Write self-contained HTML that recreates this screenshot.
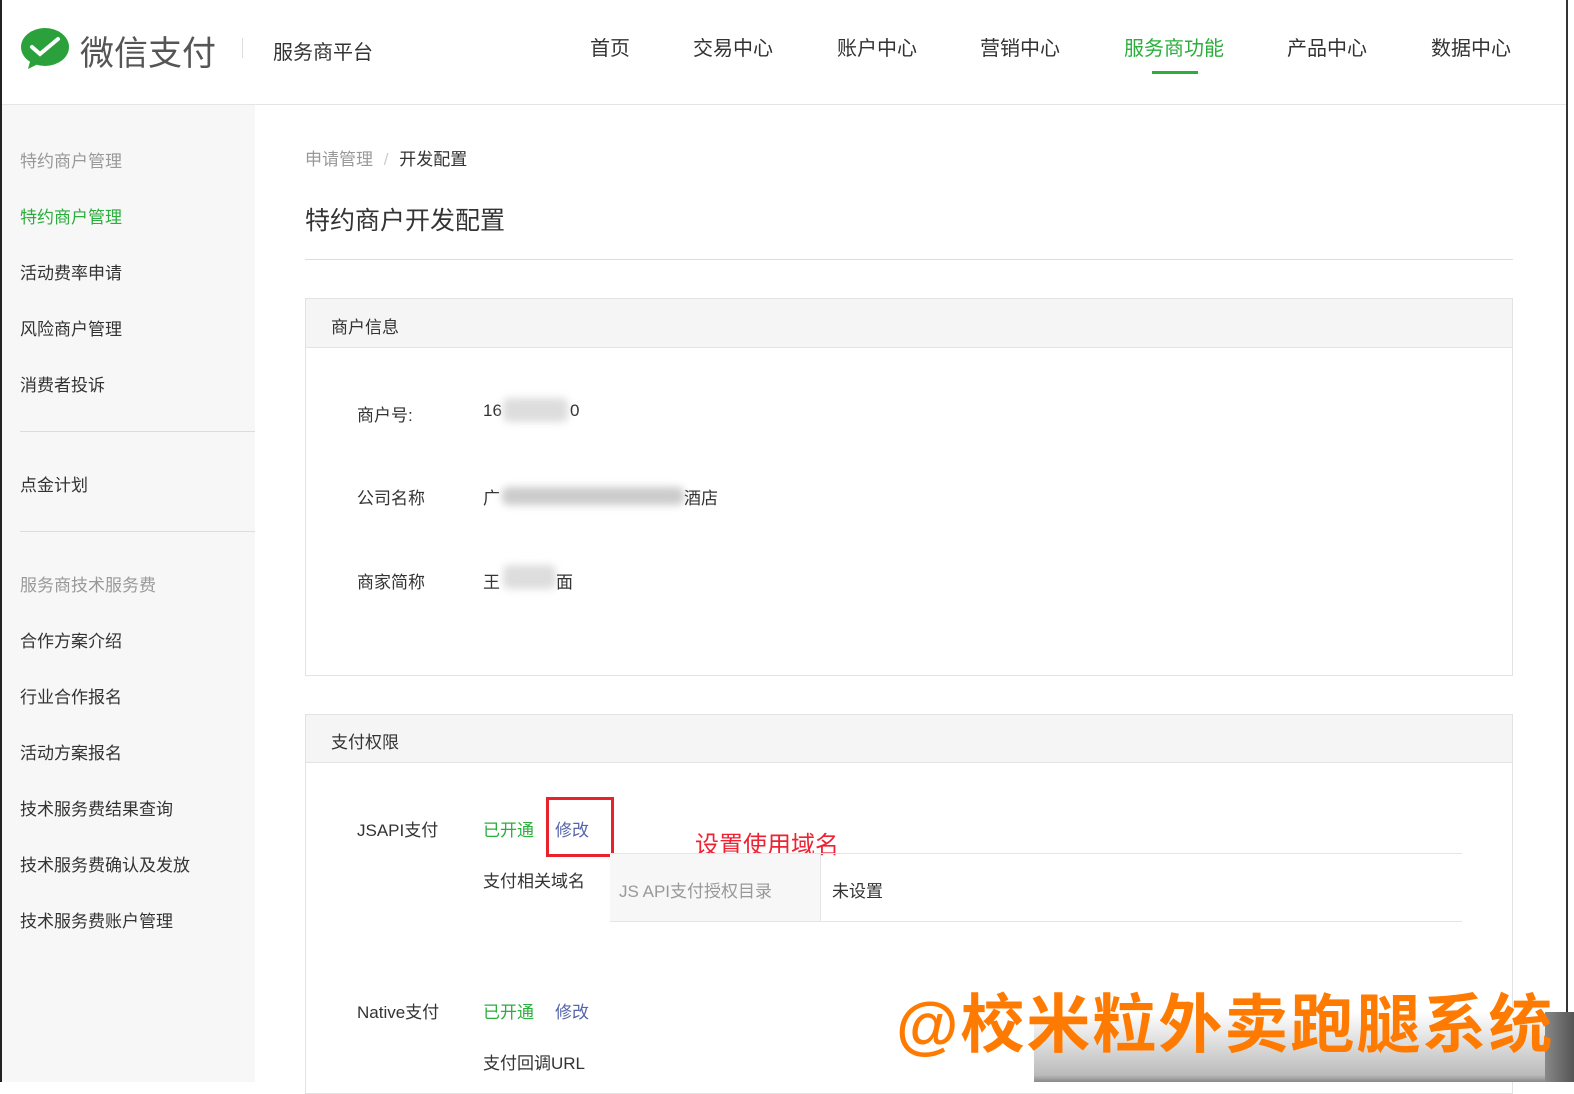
<!DOCTYPE html>
<html><head><meta charset="utf-8"><style>
*{margin:0;padding:0;box-sizing:border-box}
body{width:1574px;height:1082px;overflow:hidden;background:#fff;font-family:"Liberation Sans","Noto Sans CJK SC",sans-serif;color:#333;position:relative}
.a{position:absolute;white-space:nowrap}
.nav{font-size:20px;top:32px;color:#333}
.sb{font-size:17px;left:20px;color:#333}
.lb{font-size:17px;color:#333}
.blur{position:absolute;background:#ddd;filter:blur(4px);border-radius:6px}
</style></head><body>
<div class="a" style="left:0;top:0;width:2px;height:1082px;background:#222"></div>
<div class="a" style="left:1566px;top:0;width:2px;height:1082px;background:#333"></div>
<div class="a" style="left:2px;top:104px;width:1564px;height:1px;background:#e5e5e5"></div>
<svg class="a" style="left:20px;top:27px" width="50" height="44" viewBox="0 0 50 44"><ellipse cx="25" cy="20" rx="24" ry="19" fill="#2aa13b"/><path d="M11 31 L8 42 L20 36 Z" fill="#2aa13b"/><path d="M12 20 L20 27 L38 12" stroke="#fff" stroke-width="4" fill="none" stroke-linecap="round"/></svg>
<div class="a" style="left:80px;top:26px;font-size:34px;color:#555">微信支付</div>
<div class="a" style="left:242px;top:38px;width:1px;height:20px;background:#ddd"></div>
<div class="a" style="left:273px;top:36px;font-size:20px;color:#333">服务商平台</div>
<div class="a nav" style="left:590px">首页</div>
<div class="a nav" style="left:693px">交易中心</div>
<div class="a nav" style="left:837px">账户中心</div>
<div class="a nav" style="left:980px">营销中心</div>
<div class="a nav" style="left:1124px;color:#2aae3c">服务商功能</div>
<div class="a" style="left:1152px;top:71px;width:46px;height:3px;background:#2aae3c"></div>
<div class="a nav" style="left:1287px">产品中心</div>
<div class="a nav" style="left:1431px">数据中心</div>
<div class="a" style="left:2px;top:105px;width:253px;height:977px;background:#f7f7f7"></div>
<div class="a sb" style="top:147px;color:#999">特约商户管理</div>
<div class="a sb" style="top:203px;color:#2aae3c">特约商户管理</div>
<div class="a sb" style="top:259px">活动费率申请</div>
<div class="a sb" style="top:315px">风险商户管理</div>
<div class="a sb" style="top:371px">消费者投诉</div>
<div class="a" style="left:20px;top:431px;width:235px;height:1px;background:#ddd"></div>
<div class="a sb" style="top:471px">点金计划</div>
<div class="a" style="left:20px;top:531px;width:235px;height:1px;background:#ddd"></div>
<div class="a sb" style="top:571px;color:#999">服务商技术服务费</div>
<div class="a sb" style="top:627px">合作方案介绍</div>
<div class="a sb" style="top:683px">行业合作报名</div>
<div class="a sb" style="top:739px">活动方案报名</div>
<div class="a sb" style="top:795px">技术服务费结果查询</div>
<div class="a sb" style="top:851px">技术服务费确认及发放</div>
<div class="a sb" style="top:907px">技术服务费账户管理</div>
<div class="a" style="left:305px;top:145px;font-size:17px;color:#999">申请管理 <span style="color:#ccc;margin:0 6px">/</span> <span style="color:#333">开发配置</span></div>
<div class="a" style="left:305px;top:201px;font-size:25px;color:#333">特约商户开发配置</div>
<div class="a" style="left:305px;top:259px;width:1208px;height:1px;background:#ddd"></div>
<div class="a" style="left:305px;top:298px;width:1208px;height:378px;border:1px solid #e3e3e3"></div>
<div class="a" style="left:306px;top:299px;width:1206px;height:49px;background:#f5f5f5;border-bottom:1px solid #e3e3e3"></div>
<div class="a lb" style="left:331px;top:313px">商户信息</div>
<div class="a lb" style="left:357px;top:401px">商户号:</div>
<div class="a lb" style="left:483px;top:401px">16</div><div class="blur" style="left:503px;top:398px;width:65px;height:24px"></div><div class="a lb" style="left:570px;top:401px">0</div>
<div class="a lb" style="left:357px;top:484px">公司名称</div>
<div class="a lb" style="left:483px;top:484px">广</div><div class="blur" style="left:502px;top:487px;width:182px;height:18px;background:#ccc"></div><div class="a lb" style="left:684px;top:484px">酒店</div>
<div class="a lb" style="left:357px;top:568px">商家简称</div>
<div class="a lb" style="left:483px;top:568px">王</div><div class="blur" style="left:503px;top:565px;width:53px;height:24px"></div><div class="a lb" style="left:556px;top:568px">面</div>
<div class="a" style="left:305px;top:714px;width:1208px;height:380px;border:1px solid #e3e3e3"></div>
<div class="a" style="left:306px;top:715px;width:1206px;height:48px;background:#f5f5f5;border-bottom:1px solid #e3e3e3"></div>
<div class="a lb" style="left:331px;top:728px">支付权限</div>
<div class="a lb" style="left:357px;top:816px">JSAPI支付</div>
<div class="a lb" style="left:483px;top:816px;color:#2aae3c">已开通</div>
<div class="a lb" style="left:555px;top:816px;color:#5566aa">修改</div>
<div class="a" style="left:546px;top:797px;width:68px;height:60px;border:3px solid #e8212b"></div>
<div class="a" style="left:695px;top:825px;font-size:24px;color:#ee2233">设置使用域名</div>
<div class="a lb" style="left:483px;top:867px">支付相关域名</div>
<div class="a" style="left:610px;top:853px;width:852px;height:69px;border-top:1px solid #e5e5e5;border-bottom:1px solid #e5e5e5"></div>
<div class="a" style="left:610px;top:854px;width:211px;height:67px;background:#f7f7f7;border-right:1px solid #e5e5e5"></div>
<div class="a lb" style="left:619px;top:877px;color:#999">JS API支付授权目录</div>
<div class="a lb" style="left:832px;top:877px">未设置</div>
<div class="a lb" style="left:357px;top:998px">Native支付</div>
<div class="a lb" style="left:483px;top:998px;color:#2aae3c">已开通</div>
<div class="a lb" style="left:555px;top:998px;color:#5566aa">修改</div>
<div class="a lb" style="left:483px;top:1049px">支付回调URL</div>
<div class="a" style="left:1034px;top:1012px;width:540px;height:70px;background:linear-gradient(#fff,#bbb 90%,#888)"></div>
<div class="a" style="left:1545px;top:1012px;width:29px;height:70px;background:linear-gradient(90deg,#888,#555)"></div>
<div class="a" style="left:896px;top:985px;font-size:64px;font-weight:bold;color:#ff7a00;letter-spacing:2px;font-family:'Liberation Sans','Noto Sans CJK SC',sans-serif;line-height:80px">@校米粒外卖跑腿系统</div>
</body></html>
